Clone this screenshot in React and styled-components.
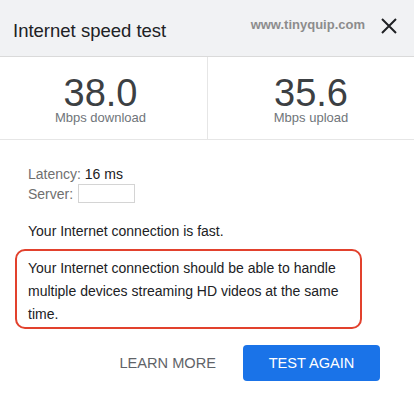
import styled, { createGlobalStyle } from "styled-components";

const GlobalStyle = createGlobalStyle`
  body {
    margin: 0;
    background: #ffffff;
    font-family: "Liberation Sans", Arial, sans-serif;
    color: #202124;
  }
`;

const stats = [
  { value: "38.0", label: "Mbps download", shift: 6 },
  { value: "35.6", label: "Mbps upload", shift: 0 },
];

const App = () => {
  return (
    <>
      <GlobalStyle />
      <StCard>
        <StHeader>
          <StTitle>Internet speed test</StTitle>
          <StSource>
            <StUrl>www.tinyquip.com</StUrl>
            <StClose aria-label="close">
              <svg width="20" height="20" viewBox="0 0 20 20">
                <path
                  d="M3 3 L17 17 M17 3 L3 17"
                  stroke="#202124"
                  strokeWidth="2"
                  fill="none"
                />
              </svg>
            </StClose>
          </StSource>
        </StHeader>

        <StStats>
          {stats.map((s) => (
            <StStat key={s.label} $shift={s.shift}>
              <StValue>{s.value}</StValue>
              <StUnit>{s.label}</StUnit>
            </StStat>
          ))}
        </StStats>

        <StBody>
          <StInfo>
            <StLine>
              <StKey>Latency:</StKey> 16 ms
            </StLine>
            <StLine>
              <StKey>Server:</StKey> <StServerBox />
            </StLine>
          </StInfo>
          <StVerdict>Your Internet connection is fast.</StVerdict>
          <StHighlight>
            Your Internet connection should be able to handle multiple devices
            streaming HD videos at the same time.
          </StHighlight>
          <StActions>
            <StTextBtn>LEARN MORE</StTextBtn>
            <StPrimaryBtn>TEST AGAIN</StPrimaryBtn>
          </StActions>
        </StBody>
      </StCard>
    </>
  );
};

const StCard = styled.div`
  width: 414px;
  min-height: 400px;
  background: #ffffff;
`;

const StHeader = styled.header`
  height: 56px;
  display: flex;
  justify-content: space-between;
  align-items: flex-start;
  padding: 0 15px 0 13px;
  background: #f1f2f4;
  border-bottom: 1px solid #dadada;
`;

const StTitle = styled.h1`
  margin: 20px 0 0;
  font-size: 18.5px;
  line-height: 22px;
  font-weight: 400;
  color: #202124;
`;

const StSource = styled.div`
  display: flex;
  align-items: center;
  gap: 14px;
  margin-top: 16px;
`;

const StUrl = styled.span`
  font-size: 13px;
  font-weight: 700;
  color: #8c8c8c;
  line-height: 16px;
  margin-top: -3px;
`;

const StClose = styled.button`
  width: 20px;
  height: 20px;
  padding: 0;
  border: 0;
  background: none;
  display: flex;
`;

const StStats = styled.section`
  display: grid;
  grid-template-columns: 1fr 1fr;
  height: 82px;
  border-bottom: 1px solid #e6e6e6;
`;

const StStat = styled.div`
  display: flex;
  flex-direction: column;
  align-items: center;
  padding-top: 19px;
  padding-right: ${(p) => p.$shift}px;
  & + & {
    border-left: 1px solid #e6e6e6;
  }
`;

const StValue = styled.div`
  font-size: 38px;
  line-height: 34px;
  color: #3c4043;
`;

const StUnit = styled.div`
  font-size: 13px;
  line-height: 15px;
  color: #70757a;
`;

const StBody = styled.div`
  padding: 24px 15px 0;
`;

const StInfo = styled.div`
  padding-left: 13px;
  font-size: 14px;
  line-height: 20px;
  color: #202124;
`;

const StLine = styled.div`
  height: 20px;
`;

const StKey = styled.span`
  color: #6f6f6f;
`;

const StServerBox = styled.span`
  display: inline-block;
  vertical-align: top;
  width: 57px;
  height: 19px;
  box-sizing: border-box;
  margin-left: 1px;
  border: 1px solid #d4d4d4;
`;

const StVerdict = styled.p`
  margin: 17px 0 0;
  padding-left: 13px;
  font-size: 14px;
  line-height: 20px;
  color: #202124;
`;

const StHighlight = styled.p`
  margin: 8px 0 0;
  width: 347px;
  box-sizing: border-box;
  padding: 6px 8px 1px 11px;
  border: 2px solid #e2412d;
  border-radius: 10px;
  font-size: 14px;
  line-height: 23px;
  color: #202124;
`;

const StActions = styled.div`
  display: flex;
  justify-content: flex-end;
  align-items: center;
  gap: 27px;
  margin-top: 16px;
  padding-right: 19px;
`;

const StTextBtn = styled.button`
  padding: 0;
  border: 0;
  background: none;
  font-family: inherit;
  font-size: 14.6px;
  color: #5f6368;
`;

const StPrimaryBtn = styled.button`
  width: 137px;
  height: 36px;
  border: 0;
  border-radius: 4px;
  background: #1a73e8;
  color: #ffffff;
  font-family: inherit;
  font-size: 14.6px;
`;

export default App;
